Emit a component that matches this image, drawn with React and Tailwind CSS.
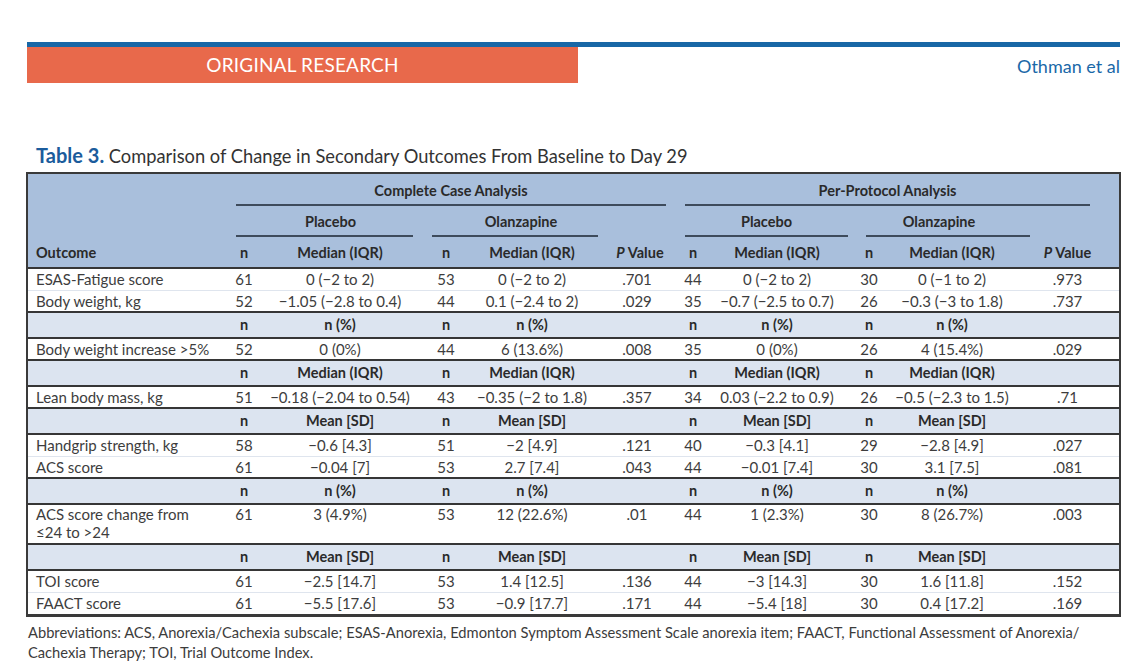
import React from 'react';

const font = { fontFamily: 'Lato, "Open Sans", sans-serif' };

const sections = [
  {
    head: null,
    rows: [
      ['ESAS-Fatigue score', '61', '0 (−2 to 2)', '53', '0 (−2 to 2)', '.701', '44', '0 (−2 to 2)', '30', '0 (−1 to 2)', '.973'],
      ['Body weight, kg', '52', '−1.05 (−2.8 to 0.4)', '44', '0.1 (−2.4 to 2)', '.029', '35', '−0.7 (−2.5 to 0.7)', '26', '−0.3 (−3 to 1.8)', '.737'],
    ],
  },
  {
    head: 'n (%)',
    rows: [['Body weight increase >5%', '52', '0 (0%)', '44', '6 (13.6%)', '.008', '35', '0 (0%)', '26', '4 (15.4%)', '.029']],
  },
  {
    head: 'Median (IQR)',
    rows: [['Lean body mass, kg', '51', '−0.18 (−2.04 to 0.54)', '43', '−0.35 (−2 to 1.8)', '.357', '34', '0.03 (−2.2 to 0.9)', '26', '−0.5 (−2.3 to 1.5)', '.71']],
  },
  {
    head: 'Mean [SD]',
    rows: [
      ['Handgrip strength, kg', '58', '−0.6 [4.3]', '51', '−2 [4.9]', '.121', '40', '−0.3 [4.1]', '29', '−2.8 [4.9]', '.027'],
      ['ACS score', '61', '−0.04 [7]', '53', '2.7 [7.4]', '.043', '44', '−0.01 [7.4]', '30', '3.1 [7.5]', '.081'],
    ],
  },
  {
    head: 'n (%)',
    rows: [['ACS score change from\n≤24 to >24', '61', '3 (4.9%)', '53', '12 (22.6%)', '.01', '44', '1 (2.3%)', '30', '8 (26.7%)', '.003']],
  },
  {
    head: 'Mean [SD]',
    rows: [
      ['TOI score', '61', '−2.5 [14.7]', '53', '1.4 [12.5]', '.136', '44', '−3 [14.3]', '30', '1.6 [11.8]', '.152'],
      ['FAACT score', '61', '−5.5 [17.6]', '53', '−0.9 [17.7]', '.171', '44', '−5.4 [18]', '30', '0.4 [17.2]', '.169'],
    ],
  },
];

const widths = [200, 32, 160, 52, 120, 90, 22, 146, 38, 128, 103];

function SubHead({ label }) {
  return (
    <tr className="h-[26px] bg-[#dce4f0] border-y-2 border-[#363636] font-bold text-[#2a2a2a] text-[14.5px] leading-[18px]">
      <td className="p-0"></td>
      <td className="p-0 text-center">n</td>
      <td className="p-0 text-center">{label}</td>
      <td className="p-0 text-center">n</td>
      <td className="p-0 text-center">{label}</td>
      <td className="p-0"></td>
      <td className="p-0 text-center">n</td>
      <td className="p-0 text-center">{label}</td>
      <td className="p-0 text-center">n</td>
      <td className="p-0 text-center">{label}</td>
      <td className="p-0"></td>
    </tr>
  );
}

function DataRow({ cells, first }) {
  const tall = cells[0].includes('\n');
  return (
    <tr
      className={`${tall ? 'h-[40px] align-top' : 'h-[22px] align-middle'} ${first ? '' : 'border-t border-[#dfe5ee]'} text-[#3d3d3d] text-[15px] leading-[18px]`}
    >
      {cells.map((c, i) => (
        <td
          key={i}
          className={`${i === 0 ? 'pl-2 text-left whitespace-pre-line' : 'text-center'} p-0`}
        >
          {c}
        </td>
      ))}
    </tr>
  );
}

export default function App() {
  return (
    <div className="w-[1145px] h-[665px] bg-white overflow-hidden" style={font}>
      <div className="pt-[42px] pl-[27px] w-[1120px]">
        <div className="h-[5px] bg-[#1867a6]"></div>
        <div className="flex items-center">
          <div className="w-[551px] h-[36px] bg-[#e8694b] flex items-center justify-center text-white text-[19px] tracking-[0.2px]">
            ORIGINAL RESEARCH
          </div>
          <div className="flex-1 text-right text-[#1a68a8] text-[18px] pt-[2px]">Othman et al</div>
        </div>
      </div>

      <div className="pl-[36px] mt-[60px] text-[18.3px] leading-[24px] text-[#333]">
        <span className="font-bold text-[#1b5c9c] text-[20px]">Table 3.</span> Comparison of Change in Secondary Outcomes From Baseline to Day 29
      </div>

      <div className="ml-[26px] mt-[4px] w-[1095px] border-2 border-b-[3px] border-[#3a3a3a]">
        <table className="w-full table-fixed border-collapse">
          <colgroup>
            {widths.map((w, i) => (
              <col key={i} style={{ width: w }} />
            ))}
          </colgroup>
          <thead className="bg-[#a9bfdc] text-[#2a2a2a] font-bold text-[14.5px] leading-[20px]">
            <tr className="h-[32px]">
              <th rowSpan={3} className="align-bottom text-left pl-2 pb-[4px] font-bold">Outcome</th>
              <th colSpan={5} className="align-bottom p-0 font-bold">
                <div className="ml-[8px] mr-[16px] border-b-2 border-[#3e4b5c] pb-[3px]">Complete Case Analysis</div>
              </th>
              <th colSpan={5} className="align-bottom p-0 font-bold">
                <div className="ml-[3px] mr-[29px] border-b-2 border-[#3e4b5c] pb-[3px]">Per-Protocol Analysis</div>
              </th>
            </tr>
            <tr className="h-[31px]">
              <th colSpan={2} className="align-bottom p-0 font-bold">
                <div className="ml-[8px] mr-[7px] border-b-2 border-[#3e4b5c] pb-[3px] pl-[12px]">Placebo</div>
              </th>
              <th colSpan={2} className="align-bottom p-0 font-bold">
                <div className="ml-[12px] -mr-[6px] border-b-2 border-[#3e4b5c] pb-[3px] pl-[12px]">Olanzapine</div>
              </th>
              <th></th>
              <th colSpan={2} className="align-bottom p-0 font-bold">
                <div className="ml-[3px] mr-[2px] border-b-2 border-[#3e4b5c] pb-[3px]">Placebo</div>
              </th>
              <th colSpan={2} className="align-bottom p-0 font-bold">
                <div className="ml-[16px] -mr-[14px] border-b-2 border-[#3e4b5c] pb-[3px] pr-[18px]">Olanzapine</div>
              </th>
              <th></th>
            </tr>
            <tr className="h-[31px] border-b-2 border-[#363636]">
              <th className="font-bold align-bottom p-0 pb-[4px]">n</th>
              <th className="font-bold align-bottom p-0 pb-[4px]">Median (IQR)</th>
              <th className="font-bold align-bottom p-0 pb-[4px]">n</th>
              <th className="font-bold align-bottom p-0 pb-[4px]">Median (IQR)</th>
              <th className="font-bold align-bottom p-0 pb-[4px] pl-[6px]"><i>P</i> Value</th>
              <th className="font-bold align-bottom p-0 pb-[4px]">n</th>
              <th className="font-bold align-bottom p-0 pb-[4px]">Median (IQR)</th>
              <th className="font-bold align-bottom p-0 pb-[4px]">n</th>
              <th className="font-bold align-bottom p-0 pb-[4px]">Median (IQR)</th>
              <th className="font-bold align-bottom p-0 pb-[4px]"><i>P</i> Value</th>
            </tr>
          </thead>
          <tbody>
            {sections.map((s, si) => (
              <React.Fragment key={si}>
                {s.head && <SubHead label={s.head} />}
                {s.rows.map((r, ri) => (
                  <DataRow key={ri} cells={r} first={ri === 0} />
                ))}
              </React.Fragment>
            ))}
          </tbody>
        </table>
      </div>

      <div className="ml-[28px] mt-[5px] w-[1100px] text-[14.7px] leading-[20px] text-[#3c3c3c]">
        Abbreviations: ACS, Anorexia/Cachexia subscale; ESAS-Anorexia, Edmonton Symptom Assessment Scale anorexia item; FAACT, Functional Assessment of Anorexia/
        <br />
        Cachexia Therapy; TOI, Trial Outcome Index.
      </div>
    </div>
  );
}
